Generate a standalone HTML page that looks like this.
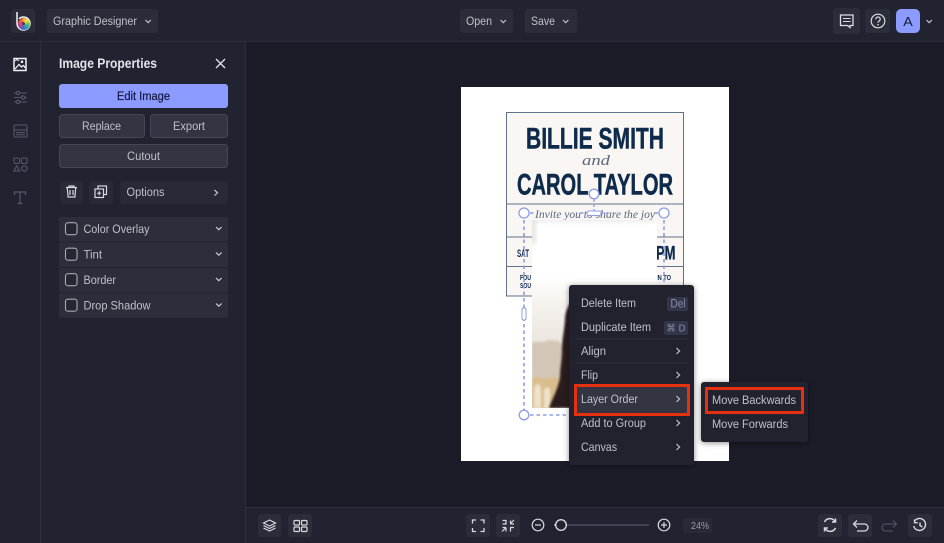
<!DOCTYPE html>
<html lang="en"><head><meta charset="utf-8"><title>Graphic Designer</title>
<style>
html,body{margin:0;padding:0;background:#1b1c28;width:944px;height:543px;overflow:hidden}
svg{display:block;position:absolute;left:0;top:0}
text{font-family:"Liberation Sans",sans-serif;font-size:12.4px;fill:#bfc0ca}
#wheel{position:absolute;left:17.500px;top:17.500px;width:12px;height:12px;border-radius:50%;background:conic-gradient(#f4b93a,#f7e04a,#8cc63f,#35b18a,#2f8fc9,#5a5fc0,#a04aa8,#e8407a,#ee5a36,#f4b93a)}
#wheel:after{content:"";position:absolute;left:4.500px;top:4.500px;width:3px;height:3px;border-radius:50%;background:#444}
</style></head>
<body>
<svg width="944" height="543" viewBox="0 0 944 543" xmlns="http://www.w3.org/2000/svg">
<defs>
<filter id="sh" x="-20%" y="-20%" width="140%" height="140%"><feDropShadow dx="0" dy="1" stdDeviation="3" flood-color="#000" flood-opacity=".45"/></filter>
<filter id="b1" x="-20%" y="-20%" width="140%" height="140%"><feGaussianBlur stdDeviation="1"/></filter>
<filter id="b2" x="-20%" y="-50%" width="140%" height="200%"><feGaussianBlur stdDeviation="2.500"/></filter>
<linearGradient id="ph" x1="0" y1="0" x2="0" y2="1"><stop offset="0" stop-color="#fff"/><stop offset=".3" stop-color="#fff"/><stop offset=".45" stop-color="#f5f2ee"/><stop offset=".65" stop-color="#ece6df"/><stop offset="1" stop-color="#e5ddd2"/></linearGradient>
<clipPath id="phc"><rect x="532" y="220" width="125" height="188"/></clipPath>
</defs>

<!-- backgrounds -->
<rect width="944" height="543" fill="#1b1c28"/>
<rect width="944" height="41" fill="#212330"/>
<rect y="41" width="245" height="502" fill="#212330"/>
<rect x="245" y="507" width="699" height="36" fill="#212330"/>
<rect y="41" width="944" height="1" fill="#2e303d"/>
<rect x="40" y="42" width="1" height="501" fill="#2e303d"/>
<rect x="245" y="42" width="1" height="501" fill="#2e303d"/>
<rect x="246" y="507" width="698" height="1" fill="#2e303d"/>

<!-- top bar -->
<rect x="11" y="9" width="24" height="24" rx="3" fill="#2b2d3a"/>
<path d="M17 12V23.500a6.500 6.500 0 1 0 2-4.700" fill="none" stroke="#f4f4f6" stroke-width="1.500"/>
<rect x="47" y="9" width="111" height="24" rx="3" fill="#2b2d3a"/>
<text x="53" y="25" textLength="84" lengthAdjust="spacingAndGlyphs">Graphic Designer</text>
<path d="M145.500 20l2.700 2.700 2.700-2.700" fill="none" stroke="#c3c4ce" stroke-width="1.200"/>
<rect x="460" y="9" width="53" height="24" rx="3" fill="#2b2d3a"/>
<text x="466" y="25" textLength="26" lengthAdjust="spacingAndGlyphs">Open</text>
<path d="M500.500 20l2.700 2.700 2.700-2.700" fill="none" stroke="#c3c4ce" stroke-width="1.200"/>
<rect x="525" y="9" width="52" height="24" rx="3" fill="#2b2d3a"/>
<text x="531" y="25" textLength="24" lengthAdjust="spacingAndGlyphs">Save</text>
<path d="M563 20l2.700 2.700 2.700-2.700" fill="none" stroke="#c3c4ce" stroke-width="1.200"/>
<rect x="833" y="8" width="27" height="26" rx="3" fill="#2b2d3a"/>
<path d="M840.500 15h12.500v10.500h-3v2l-2.500-2h-7z" fill="none" stroke="#dcdde3" stroke-width="1.300"/>
<path d="M843 18.500h7.500M843 21.500h7.500" stroke="#dcdde3" stroke-width="1.100"/>
<rect x="865" y="9" width="25" height="24" rx="3" fill="#2b2d3a"/>
<circle cx="878" cy="21" r="6.800" fill="none" stroke="#dcdde3" stroke-width="1.200"/>
<path d="M875.800 19.200a2.200 2.200 0 1 1 3.400 1.800c-.8.500-1.200.9-1.200 1.700" fill="none" stroke="#dcdde3" stroke-width="1.200"/>
<circle cx="878" cy="24.700" r=".8" fill="#dcdde3"/>
<rect x="896" y="9" width="24" height="24" rx="5" fill="#8c9bff"/>
<text x="908" y="26" text-anchor="middle" style="font-size:13px;fill:#161a3a" textLength="9.500" lengthAdjust="spacingAndGlyphs">A</text>
<path d="M926.500 20l2.700 2.700 2.700-2.700" fill="none" stroke="#c3c4ce" stroke-width="1.200"/>

<!-- left rail -->
<g fill="none">
<rect x="14" y="58.500" width="12" height="12" stroke="#f0f0f3" stroke-width="1.500"/>
<path d="M15 69l4-4.500 2.500 2.500 2-1.500 2 2.500" stroke="#f0f0f3" stroke-width="1.300"/>
<circle cx="22" cy="61.800" r="1.300" fill="#f0f0f3"/>
<path d="M15 61l2-1.500 2 1.500" stroke="#f0f0f3"/>
<g stroke="#555868" stroke-width="1.100">
<path d="M14 93h13M14 97.500h13M14 102h13"/>
<circle cx="18" cy="93" r="1.700" fill="#212330"/><circle cx="23" cy="97.500" r="1.700" fill="#212330"/><circle cx="18" cy="102" r="1.700" fill="#212330"/>
<rect x="14" y="125" width="13" height="12" rx="1"/>
<path d="M14 130h13M16 132.500h9M16 134.700h9"/>
<rect x="14" y="158" width="5.500" height="5.500" rx="1.500"/><rect x="21.500" y="158" width="5.500" height="5.500" rx="1"/>
<path d="M16.700 166l3 5h-6z"/><circle cx="24.300" cy="168.500" r="2.700"/>
<path d="M14.500 195v-3h11v3M20 192v11.500M17.500 203.500h5" stroke-width="1.200"/>
</g>
</g>

<!-- panel -->
<text x="59" y="68" textLength="98" lengthAdjust="spacingAndGlyphs" style="font-size:13.500px;font-weight:700;fill:#e3e3e9">Image Properties</text>
<path d="M216 59l9 9M225 59l-9 9" stroke="#e4e4ea" stroke-width="1.300"/>
<rect x="59" y="84" width="169" height="24" rx="3" fill="#8c9bff"/>
<text x="117" y="100" textLength="53" lengthAdjust="spacingAndGlyphs" style="fill:#171b44;stroke:#171b44;stroke-width:.25">Edit Image</text>
<g fill="#333543" stroke="#454756"><rect x="59.500" y="114.500" width="85" height="23" rx="3"/><rect x="150.500" y="114.500" width="77" height="23" rx="3"/><rect x="59.500" y="144.500" width="168" height="23" rx="3"/></g>
<text x="82" y="130" textLength="39" lengthAdjust="spacingAndGlyphs">Replace</text>
<text x="173" y="130" textLength="32" lengthAdjust="spacingAndGlyphs">Export</text>
<text x="127" y="160" textLength="33" lengthAdjust="spacingAndGlyphs">Cutout</text>

<g fill="#282a37"><rect x="60" y="181" width="23" height="23" rx="3"/><rect x="89" y="181" width="24" height="23" rx="3"/><rect x="120" y="181" width="108" height="23" rx="3"/></g>
<g fill="none" stroke="#d8d9df" stroke-width="1.200">
<path d="M66 187.500h11M69 187.500v-1.500h5v1.500M67.300 188l.8 9h6.800l.8-9M70 190v5M73 190v5"/>
<rect x="98" y="186" width="8.500" height="8.500"/>
<rect x="95" y="189" width="8.500" height="8.500" fill="#282a37"/>
<path d="M99.200 191.200v4M97.200 193.200h4"/>
</g>
<text x="126.500" y="196" textLength="38" lengthAdjust="spacingAndGlyphs">Options</text>
<path d="M214.500 190l3 2.800-3 2.800" fill="none" stroke="#c3c4ce" stroke-width="1.200"/>

<g fill="#2c2e3b"><rect x="59" y="217" width="169" height="24.500" rx="2"/><rect x="59" y="242.500" width="169" height="24.500" rx="2"/><rect x="59" y="268" width="169" height="24.500" rx="2"/><rect x="59" y="293.500" width="169" height="24.500" rx="2"/></g>
<g fill="#242632" stroke="#a9aab5" stroke-width="1.100"><rect x="65.500" y="222.700" width="11.500" height="12" rx="2.500"/><rect x="65.500" y="248.200" width="11.500" height="12" rx="2.500"/><rect x="65.500" y="273.700" width="11.500" height="12" rx="2.500"/><rect x="65.500" y="299.200" width="11.500" height="12" rx="2.500"/></g>
<text x="83.500" y="233" textLength="66" lengthAdjust="spacingAndGlyphs">Color Overlay</text>
<text x="83.500" y="258.500" textLength="18.500" lengthAdjust="spacingAndGlyphs">Tint</text>
<text x="83.500" y="284" textLength="32.500" lengthAdjust="spacingAndGlyphs">Border</text>
<text x="83.500" y="309.500" textLength="67" lengthAdjust="spacingAndGlyphs">Drop Shadow</text>
<g fill="none" stroke="#d0d1d9" stroke-width="1.200"><path d="M216 227l2.800 2.700 2.800-2.700M216 252.500l2.800 2.700 2.800-2.700M216 278l2.800 2.700 2.800-2.700M216 303.500l2.800 2.700 2.800-2.700"/></g>

<!-- page -->
<rect x="461" y="87" width="268" height="374" fill="#fff"/>
<rect x="506.500" y="112.500" width="177" height="183.500" fill="#faf6f4" stroke="#5e7288"/>
<path d="M507 204h176M507 237h176M507 266.500h176" stroke="#5e7288"/>
<text x="526" y="148.500" textLength="138" lengthAdjust="spacingAndGlyphs" style="font-size:29.500px;font-weight:700;fill:#0e2b4c;stroke:#0e2b4c;stroke-width:.5">BILLIE SMITH</text>
<text x="517" y="194.500" textLength="156" lengthAdjust="spacingAndGlyphs" style="font-size:29.500px;font-weight:700;fill:#0e2b4c;stroke:#0e2b4c;stroke-width:.5">CAROL TAYLOR</text>
<text x="582" y="165" textLength="28" lengthAdjust="spacingAndGlyphs" style="font-family:'Liberation Serif',serif;font-style:italic;font-size:15px;fill:#5a6880">and</text>
<text x="535" y="218" textLength="120" lengthAdjust="spacingAndGlyphs" style="font-family:'Liberation Serif',serif;font-style:italic;font-size:11.500px;fill:#5a6680">Invite you to share the joy</text>
<text x="517" y="257" textLength="12" lengthAdjust="spacingAndGlyphs" style="font-size:11px;font-weight:700;fill:#0e2b4c">SAT</text>
<text x="656" y="259.500" textLength="19.500" lengthAdjust="spacingAndGlyphs" style="font-size:19px;font-weight:700;fill:#0e2b4c;stroke:#0e2b4c;stroke-width:.3">PM</text>
<text x="520" y="280" textLength="11" lengthAdjust="spacingAndGlyphs" style="font-size:7.500px;font-weight:700;fill:#0e2b4c">FOU</text>
<text x="520" y="288" textLength="11" lengthAdjust="spacingAndGlyphs" style="font-size:7.500px;font-weight:700;fill:#0e2b4c">SOU</text>
<text x="656" y="280" textLength="15" lengthAdjust="spacingAndGlyphs" style="font-size:7.500px;font-weight:700;fill:#0e2b4c">IN TO</text>

<!-- photo -->
<rect x="532" y="220" width="125" height="188" fill="url(#ph)"/>
<g clip-path="url(#phc)">
<path d="M530 218h6v26h-6z" fill="#cfcdcd" opacity=".55" filter="url(#b2)"/>
<path d="M532 217h124v5h-124z" fill="#d8d6d6" opacity=".5" filter="url(#b2)"/>
<path d="M532 342h12l5-2 9 1 6 5v34h-32z" fill="#d3c6b6" filter="url(#b1)"/>
<path d="M532 378h28v30h-28z" fill="#dabd8c" filter="url(#b1)"/>
<path d="M534 390a3.500 6 0 0 1 7 0v18h-7zM544 390a3.500 6 0 0 1 6 0v18h-6z" fill="#eee2cc" filter="url(#b1)"/>
<path d="M572 300c-4 6-7 12-7 20-1 12-3 20-3 30 0 10-2 18-2 27-2 12-7 20-11 31h30V300z" fill="#2a1b1c" filter="url(#b1)"/>
</g>

<!-- selection -->
<g fill="none" stroke="#8f9de6">
<path d="M524 220V415M664 220V288M530 415H570M530 213H536M580 213H608M655 213H658" stroke-width="1.600" stroke-dasharray="3.500 3"/>
<path d="M594 199V211" stroke-width="1.300" stroke-dasharray="3 2"/>
<circle cx="524" cy="213" r="5" fill="#fff" stroke-width="1.300"/>
<circle cx="664" cy="213" r="5" fill="#fff" stroke-width="1.300"/>
<circle cx="594" cy="194" r="4.800" fill="#fff" stroke-width="1.300"/>
<circle cx="524" cy="415" r="4.800" fill="#fff" stroke-width="1.300"/>
<rect x="587" y="211" width="14" height="4.500" rx="2" fill="#fff"/>
<rect x="522" y="308" width="4" height="12" rx="1.500" fill="#fff"/>
</g>

<!-- context menu -->
<rect x="569" y="285" width="125" height="180" rx="3" fill="#22232f" filter="url(#sh)"/>
<text x="581" y="307" textLength="55" lengthAdjust="spacingAndGlyphs">Delete Item</text>
<rect x="667" y="297" width="21" height="14" rx="2" fill="#33364a"/>
<text x="670.500" y="307.500" textLength="15" lengthAdjust="spacingAndGlyphs" style="fill:#8a8da6">Del</text>
<text x="581" y="331" textLength="70" lengthAdjust="spacingAndGlyphs">Duplicate Item</text>
<rect x="664" y="321" width="24" height="14" rx="2" fill="#33364a"/>
<text x="666.500" y="331.500" textLength="19" lengthAdjust="spacingAndGlyphs" style="fill:#8a8da6;font-family:'DejaVu Sans',sans-serif;font-size:10px">⌘ D</text>
<path d="M575 339h113M575 363h113" stroke="#2e303c"/>
<text x="581" y="355" textLength="25" lengthAdjust="spacingAndGlyphs">Align</text>
<text x="581" y="379" textLength="17" lengthAdjust="spacingAndGlyphs">Flip</text>
<rect x="577" y="387" width="110" height="26" fill="#333543"/>
<text x="581" y="403" textLength="57" lengthAdjust="spacingAndGlyphs">Layer Order</text>
<text x="581" y="427" textLength="65" lengthAdjust="spacingAndGlyphs">Add to Group</text>
<text x="581" y="451" textLength="36" lengthAdjust="spacingAndGlyphs">Canvas</text>
<g fill="none" stroke="#c3c4ce" stroke-width="1.200"><path d="M676.500 348l3 3-3 3M676.500 372l3 3-3 3M676.500 396l3 3-3 3M676.500 420l3 3-3 3M676.500 444l3 3-3 3"/></g>
<rect x="575.500" y="385.500" width="113" height="29" fill="none" stroke="#e5310f" stroke-width="3"/>

<!-- submenu -->
<rect x="701" y="382" width="107" height="60" rx="3" fill="#22232f" filter="url(#sh)"/>
<text x="712" y="404" textLength="84" lengthAdjust="spacingAndGlyphs">Move Backwards</text>
<text x="712" y="428" textLength="76" lengthAdjust="spacingAndGlyphs">Move Forwards</text>
<rect x="706.500" y="388.500" width="96" height="24" fill="none" stroke="#e5310f" stroke-width="3"/>

<!-- bottom bar -->
<g fill="#2b2d3a"><rect x="258" y="514" width="23" height="23" rx="3"/><rect x="288" y="514" width="24" height="23" rx="3"/><rect x="466" y="514" width="24" height="23" rx="3"/><rect x="496" y="514" width="24" height="23" rx="3"/><rect x="818" y="514" width="24" height="23" rx="3"/><rect x="848" y="514" width="24" height="23" rx="3"/><rect x="908" y="514" width="24" height="23" rx="3"/></g>
<g fill="none" stroke="#d8d9df" stroke-width="1.200">
<path d="M269.500 520l6 3-6 3-6-3zM263.500 525.500l6 3 6-3M263.500 528l6 3 6-3"/>
<rect x="294" y="520.500" width="5.500" height="4.500" rx="1"/><rect x="301.500" y="520.500" width="5.500" height="4.500" rx="1"/><rect x="294" y="527" width="5.500" height="4.500" rx="1"/><rect x="301.500" y="527" width="5.500" height="4.500" rx="1"/>
<path d="M472.500 523.500v-3.500h3.500M480.500 520h3.500v3.500M484 528v3.500h-3.500M476 531.500h-3.500V528" stroke-width="1.300"/>
<path d="M502.500 520.500h3.500v3.500h-3.500M510.500 524h3.500M510.500 524v-3.500M514 520l-3.500 3.500M506 527.500h-3.500M506 527.500v4M502 531.500l4-4M510.500 531.500v-4h3.500" stroke-width="1.200"/>
<circle cx="538" cy="525" r="5.800"/><path d="M535 525h6"/>
<path d="M567 525h82" stroke="#4b4d5c" stroke-width="1.400"/>
<path d="M554 525h2"/>
<circle cx="561" cy="525" r="5.300" stroke-width="1.400"/>
<circle cx="664" cy="525" r="5.800"/><path d="M661 525h6M664 522v6"/>
<path d="M824.500 522a6 6 0 0 1 10.500-.5M835.500 528a6 6 0 0 1-10.500.5M835.500 518.500v3.500h-3.500M824.500 531.500V528h3.500" stroke-width="1.500"/>
<path d="M854 524h10.500a3.500 3.500 0 0 1 0 7H857M857 520.500l-3.500 3.500 3.500 3.500" stroke-width="1.300"/>
<path d="M896 524h-10.500a3.500 3.500 0 0 0 0 7H893M893 520.500l3.500 3.500-3.500 3.500" stroke="#4b4d5c" stroke-width="1.300"/>
<path d="M915 520.500a6 6 0 1 1-1.300 5.500M914.500 519.500v3.200h3.200M920 522.500v3l2.300 1.500" stroke-width="1.400"/>
</g>
<rect x="683" y="518" width="29" height="15" rx="2" fill="#282a37"/>
<text x="691" y="529" textLength="18" lengthAdjust="spacingAndGlyphs" style="font-size:10.500px;fill:#9a9cab">24%</text>
</svg>
<div id="wheel"></div>
</body></html>
